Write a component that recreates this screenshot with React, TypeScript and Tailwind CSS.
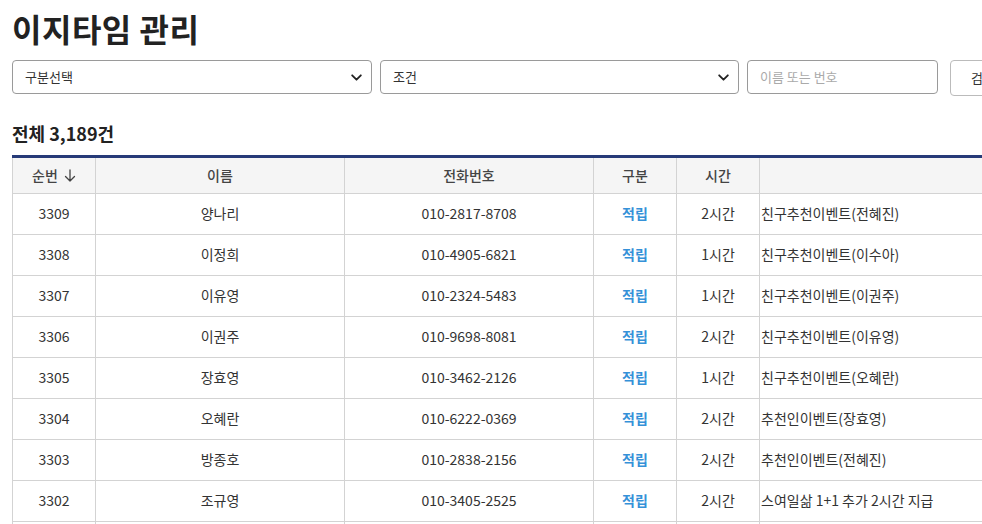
import React from "react";

const rows = [
  ["3309", "양나리", "010-2817-8708", "2시간", "친구추천이벤트(전혜진)"],
  ["3308", "이정희", "010-4905-6821", "1시간", "친구추천이벤트(이수아)"],
  ["3307", "이유영", "010-2324-5483", "1시간", "친구추천이벤트(이권주)"],
  ["3306", "이권주", "010-9698-8081", "2시간", "친구추천이벤트(이유영)"],
  ["3305", "장효영", "010-3462-2126", "1시간", "친구추천이벤트(오혜란)"],
  ["3304", "오혜란", "010-6222-0369", "2시간", "추천인이벤트(장효영)"],
  ["3303", "방종호", "010-2838-2156", "2시간", "추천인이벤트(전혜진)"],
  ["3302", "조규영", "010-3405-2525", "2시간", "스여일삶 1+1 추가 2시간 지급"],
];

function Chevron() {
  return (
    <svg width="13" height="13" viewBox="0 0 24 24" fill="none" stroke="#222" strokeWidth="3.4" strokeLinecap="round" strokeLinejoin="round">
      <path d="M4 8l8 8 8-8" />
    </svg>
  );
}

export default function App() {
  return (
    <div
      className="w-[982px] h-[524px] overflow-hidden bg-white text-[#333]"
      style={{ fontFamily: '"Noto Sans CJK KR", "Noto Sans", sans-serif' }}
    >
      <div className="pl-3 w-[1200px]">
        <h1 className="text-[32px] font-bold leading-[40px] pt-[8px] text-[#222] tracking-[0.5px]">이지타임 관리</h1>
        <div className="flex items-start mt-[12px] gap-[8px]">
          <div className="w-[360px] h-[34px] border border-[#9a9a9a] rounded-[4px] flex items-center justify-between pl-[12px] pr-[8px] text-[13px] text-[#333]">
            <span>구분선택</span>
            <Chevron />
          </div>
          <div className="w-[359px] h-[34px] border border-[#9a9a9a] rounded-[4px] flex items-center justify-between pl-[12px] pr-[8px] text-[13px] text-[#333]">
            <span>조건</span>
            <Chevron />
          </div>
          <div className="w-[191px] h-[34px] border border-[#9a9a9a] rounded-[4px] flex items-center pl-[12px] text-[13px] text-[#aaa]">
            이름 또는 번호
          </div>
          <div className="ml-[4px] w-[70px] h-[36px] border border-[#bbb] rounded-[4px] flex items-center pl-[20px] text-[13px] text-[#333]">
            검색
          </div>
        </div>
        <div className="mt-[24px] text-[18px] font-bold text-[#222] leading-[26px]">전체 3,189건</div>
        <div className="mt-[9px] border-t-[3px] border-[#263a78]">
          <table className="border-collapse w-[1188px] text-[14px] table-fixed">
            <colgroup>
              <col className="w-[83px]" />
              <col className="w-[249px]" />
              <col className="w-[249px]" />
              <col className="w-[83px]" />
              <col className="w-[83px]" />
              <col />
            </colgroup>
            <thead>
              <tr className="h-[35px] bg-[#f5f5f5] text-[#444]">
                <th className="border border-t-0 border-[#d3d3d3] font-medium">
                  <span className="inline-flex items-center gap-[6px]">
                    순번
                    <svg width="12" height="13" viewBox="0 0 12 13" fill="none" stroke="#444" strokeWidth="1.3" strokeLinecap="round" strokeLinejoin="round">
                      <path d="M6 1v11M1.5 7.5L6 12l4.5-4.5" />
                    </svg>
                  </span>
                </th>
                <th className="border border-t-0 border-[#d3d3d3] font-medium">이름</th>
                <th className="border border-t-0 border-[#d3d3d3] font-medium">전화번호</th>
                <th className="border border-t-0 border-[#d3d3d3] font-medium">구분</th>
                <th className="border border-t-0 border-[#d3d3d3] font-medium">시간</th>
                <th className="border border-t-0 border-[#d3d3d3] font-medium"></th>
              </tr>
            </thead>
            <tbody>
              {rows.map((r) => (
                <tr key={r[0]} className="h-[41px] text-[#333]">
                  <td className="border border-[#d3d3d3] text-center">{r[0]}</td>
                  <td className="border border-[#d3d3d3] text-center">{r[1]}</td>
                  <td className="border border-[#d3d3d3] text-center">{r[2]}</td>
                  <td className="border border-[#d3d3d3] text-center font-bold text-[#3591d8]">적립</td>
                  <td className="border border-[#d3d3d3] text-center">{r[3]}</td>
                  <td className="border border-[#d3d3d3] text-left pl-[1px]">{r[4]}</td>
                </tr>
              ))}
              <tr className="h-[41px]">
                <td className="border border-[#d3d3d3]"></td>
                <td className="border border-[#d3d3d3]"></td>
                <td className="border border-[#d3d3d3]"></td>
                <td className="border border-[#d3d3d3]"></td>
                <td className="border border-[#d3d3d3]"></td>
                <td className="border border-[#d3d3d3]"></td>
              </tr>
            </tbody>
          </table>
        </div>
      </div>
    </div>
  );
}
